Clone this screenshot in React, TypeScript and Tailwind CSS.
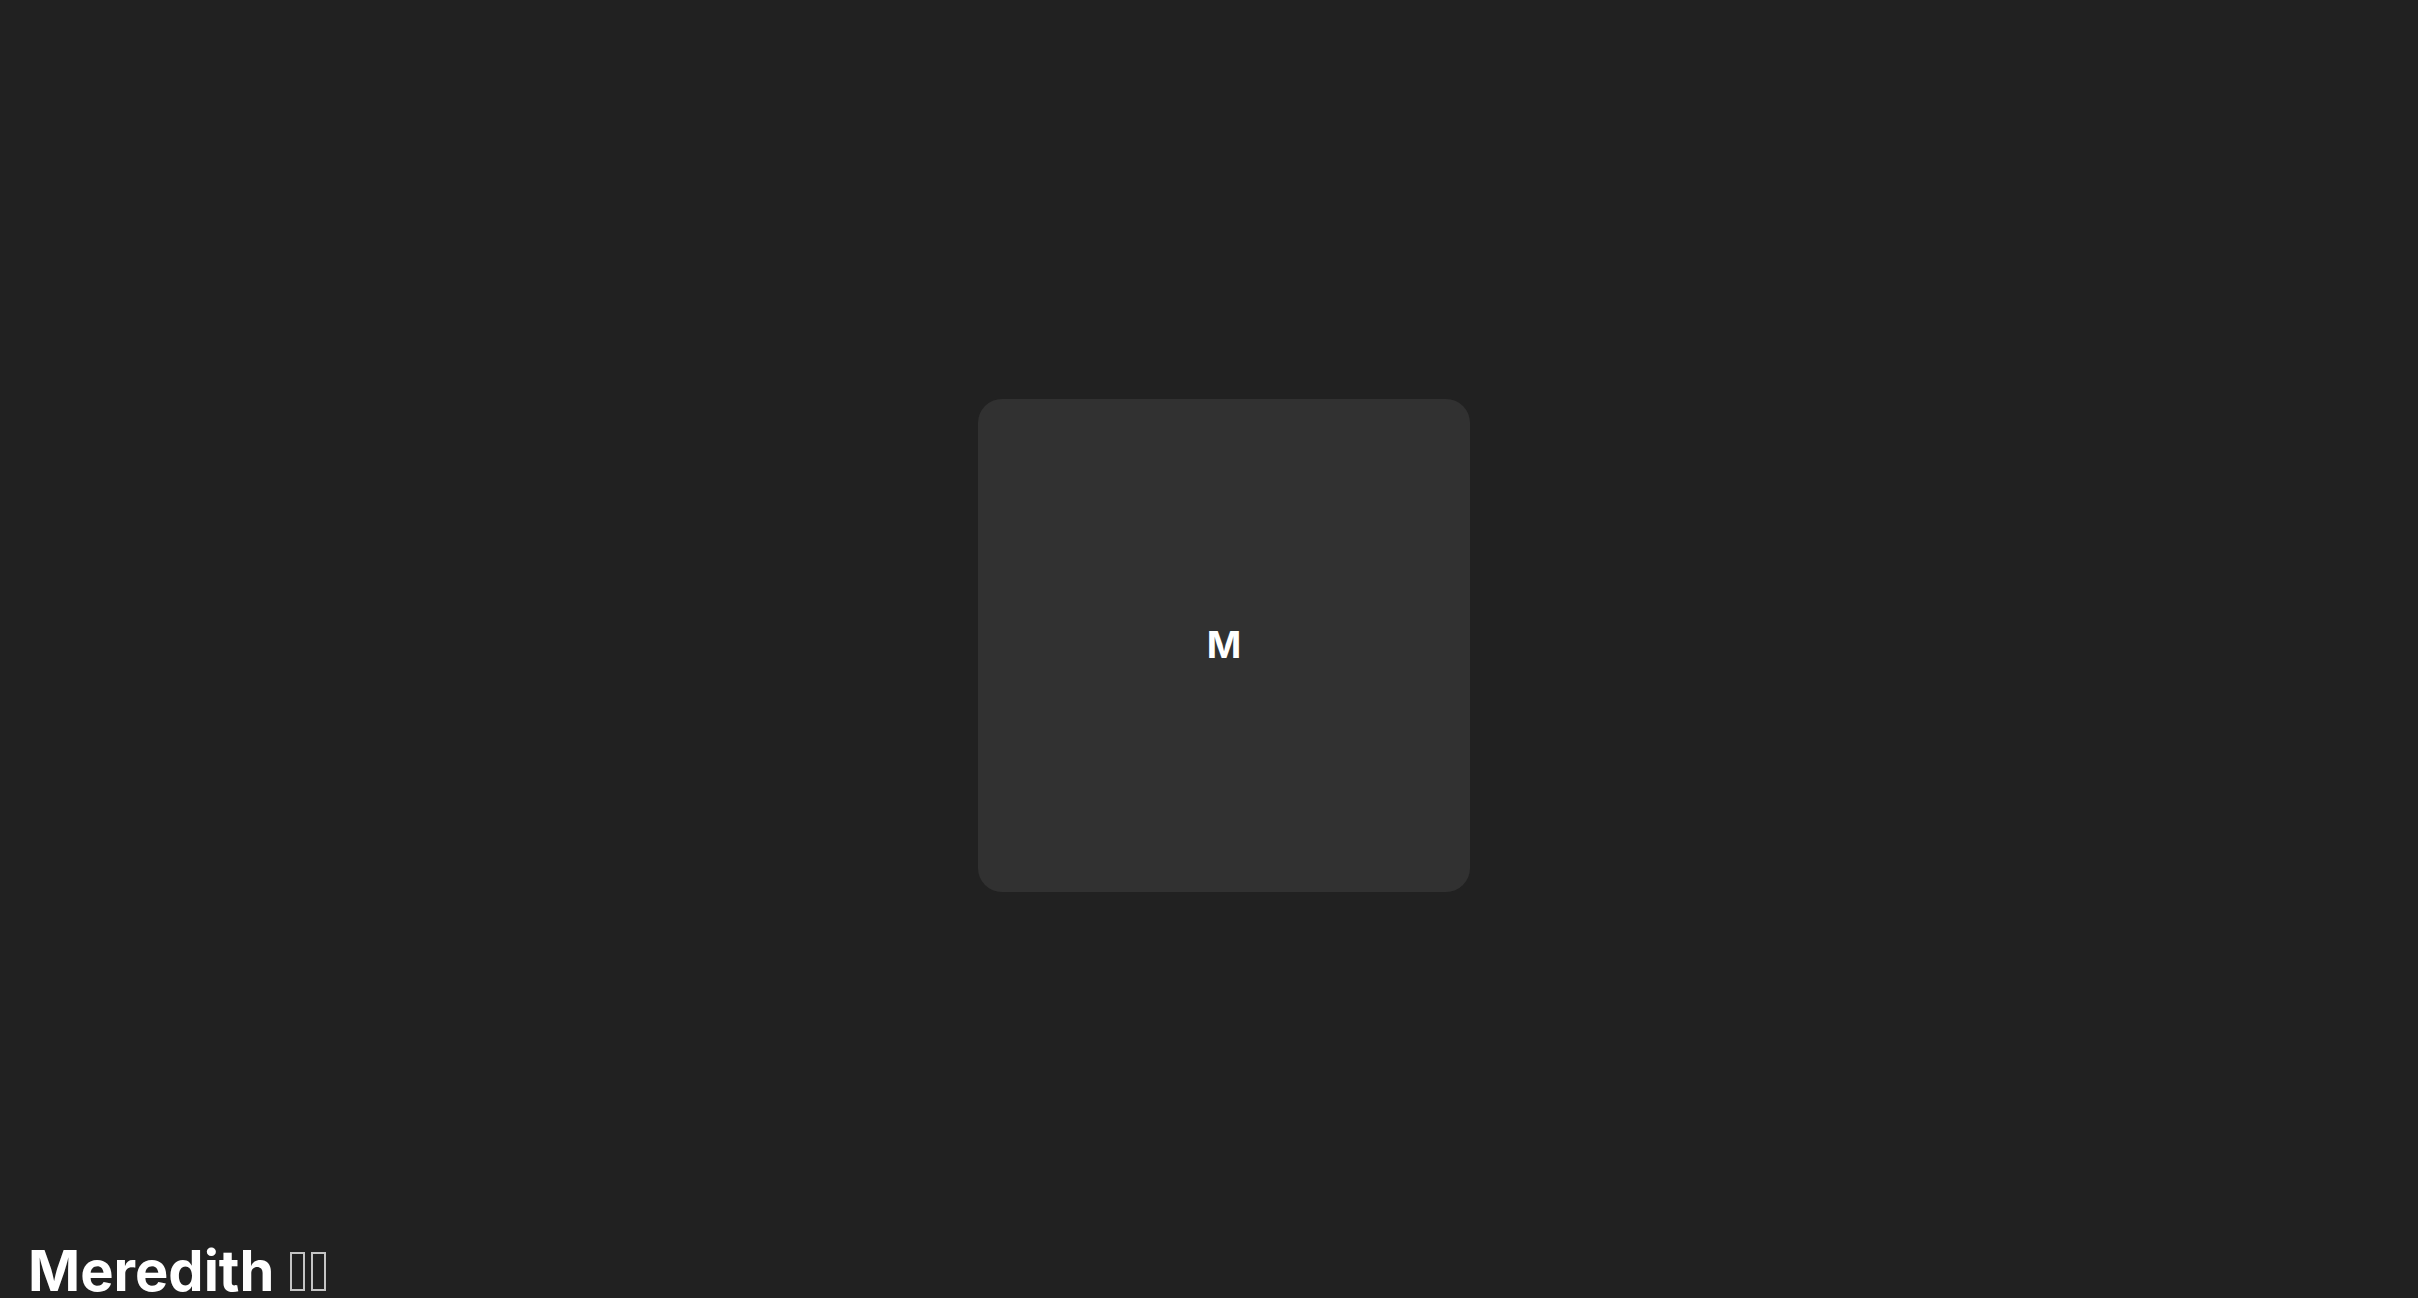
export default function App() {
  return (
    <div
      className="relative flex h-[1298px] w-full items-center justify-center overflow-hidden bg-[#212121] pb-[7px] pl-[30px]"
      style={{ fontFamily: "Inter, 'Noto Sans', sans-serif" }}
    >
      <div className="flex h-[493px] w-[492px] items-center justify-center rounded-[24px] bg-[#313131]">
        <span className="mb-[2px] text-[37px] font-bold leading-none text-white">M</span>
      </div>
      <div className="absolute left-[28px] top-[1243px] whitespace-nowrap text-[56px] font-bold leading-none text-white">
        Meredith
        <span className="ml-[16px] inline-block h-[39px] w-[15px] border-2 border-[#c4c4c4]" />
        <span className="ml-[6px] inline-block h-[39px] w-[15px] border-2 border-[#c4c4c4]" />
      </div>
    </div>
  );
}
